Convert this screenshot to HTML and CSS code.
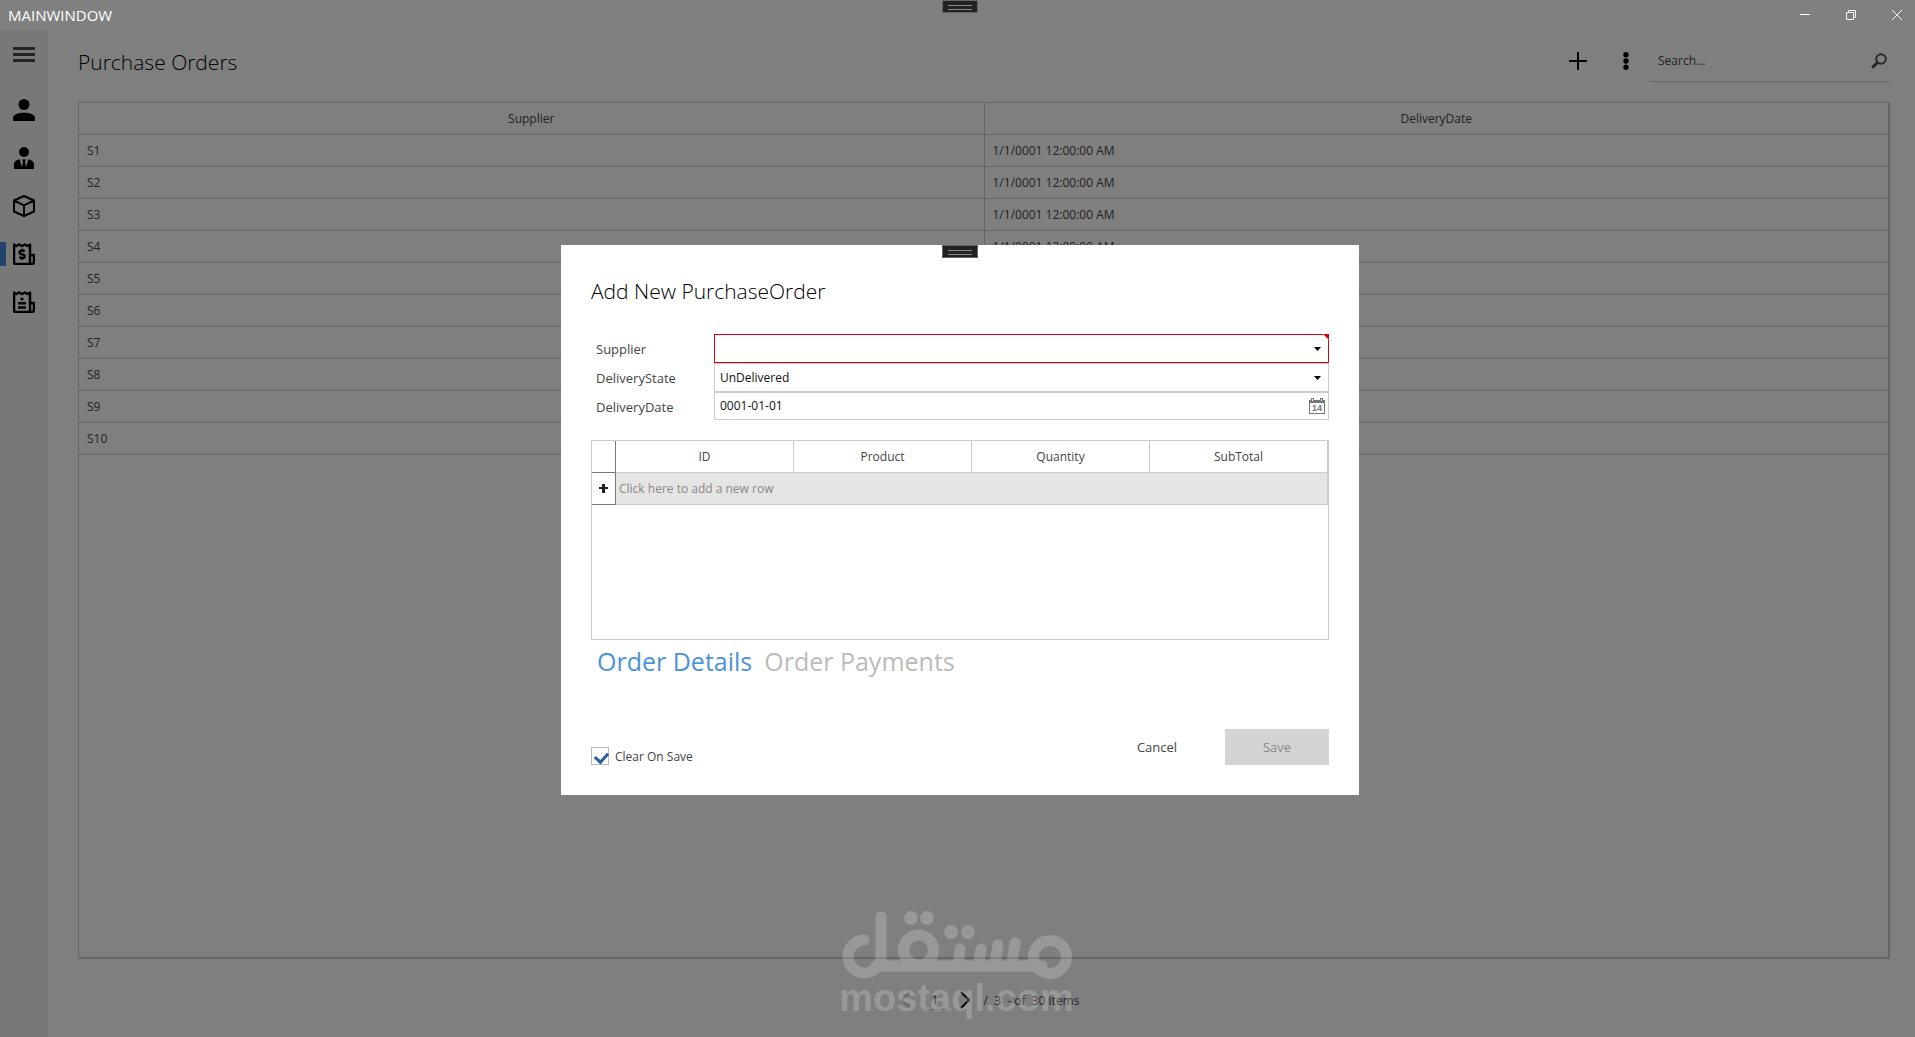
FILE: index.html
```html
<!DOCTYPE html>
<html lang="en">
<head>
  <meta charset="UTF-8" />
  <meta name="viewport" content="width=device-width, initial-scale=1.0" />
  <title>MainWindow</title>
  <link rel="stylesheet" href="styles.css">
</head>
<body>
  <div class="titlebar">
    <span class="window-title">MAINWINDOW</span>
    <span class="handle window-handle"></span>
    <div class="window-buttons">
      <button type="button" aria-label="Minimize">
        <svg width="10" height="10" viewBox="0 0 10 10"><path d="M0 4.500h10" /></svg>
      </button>
      <button type="button" aria-label="Restore">
        <svg width="10" height="10" viewBox="0 0 10 10"><path d="M.5 2.500h7v7h-7zM2.500 2.500v-2h7v7h-2" /></svg>
      </button>
      <button type="button" aria-label="Close">
        <svg width="10" height="10" viewBox="0 0 10 10"><path d="M0 0l10 10M10 0L0 10" /></svg>
      </button>
    </div>
  </div>

  <div class="app">
    <nav class="sidebar">
      <button type="button" class="menu-button" aria-label="Menu">
        <svg width="22" height="22" viewBox="0 0 22 22"><path d="M0 3h22v3H0zM0 9h22v3H0zM0 15h22v3H0z" fill="#4c4554" /></svg>
      </button>
      <button type="button" aria-label="Customers">
        <svg width="22" height="22" viewBox="0 0 22 22"><circle cx="11" cy="5.500" r="5.500" /><path d="M0 22v-3c0-3.500 6-5.300 11-5.300S22 15.500 22 19v3z" /></svg>
      </button>
      <button type="button" aria-label="Employees">
        <svg width="22" height="22" viewBox="0 0 22 22"><circle cx="11" cy="5" r="5" /><path d="M1 22v-4.500c0-3 2.500-4.600 5.500-5.300L9 20l1-5-1-2.500h4L12 15l1 5 2.500-7.800c3 .7 5.500 2.300 5.500 5.300V22z" /></svg>
      </button>
      <button type="button" aria-label="Products">
        <svg width="22" height="22" viewBox="0 0 22 22"><path class="line" d="M11 1l10 4.500v11L11 21 1 16.500v-11zM1 5.500l10 4.800 10-4.800M11 10.300V21" /></svg>
      </button>
      <button type="button" class="active" aria-label="Purchase orders">
        <svg width="22" height="22" viewBox="0 0 22 22"><path class="line bold" d="M17 21H3q-2 0-2-2V1.500L3.500 3 6.300 1.500 9 3l2.700-1.500L14.500 3 17 1.500v17.700q0 1.800 1.900 1.800T21 19v-7h-4" /><path class="line bold" d="M11.700 8.400C9.500 7 6.500 7.600 6.500 9.500c0 2.500 5.200 1.200 5.200 3.700 0 2-3.200 2.300-5.400 1M9 5.700v2M9 14.500v2.300" /></svg>
      </button>
      <button type="button" aria-label="Sale orders">
        <svg width="22" height="22" viewBox="0 0 22 22"><path class="line bold" d="M17 21H3q-2 0-2-2V1.500L3.500 3 6.300 1.500 9 3l2.700-1.500L14.500 3 17 1.500v17.700q0 1.800 1.900 1.800T21 19v-7h-4M7.500 8h3M5 12.300h8M5 16.500h8" /></svg>
      </button>
    </nav>

    <main class="page">
      <header class="page-header">
        <h1>Purchase Orders</h1>
        <button type="button" class="tool" aria-label="Add">
          <svg width="18" height="18" viewBox="0 0 18 18"><path d="M8 0h2v8h8v2h-8v8H8v-8H0V8h8z" /></svg>
        </button>
        <button type="button" class="tool" aria-label="More">
          <svg width="6" height="18" viewBox="0 0 6 18"><circle cx="3" cy="2.700" r="2.700" /><circle cx="3" cy="9" r="2.700" /><circle cx="3" cy="15.300" r="2.700" /></svg>
        </button>
        <div class="search">
          <input type="text" placeholder="Search..." aria-label="Search">
          <svg width="16" height="16" viewBox="0 0 16 16"><circle cx="10" cy="6" r="4.800" fill="none" stroke="#544c5c" stroke-width="2" /><path d="M6.500 9.500L1.200 14.800" stroke="#544c5c" stroke-width="3" /></svg>
        </div>
      </header>

      <div class="grid">
        <table>
          <thead>
            <tr><th>Supplier</th><th>DeliveryDate</th></tr>
          </thead>
          <tbody>
            <tr><td>S1</td><td>1/1/0001 12:00:00 AM</td></tr>
            <tr><td>S2</td><td>1/1/0001 12:00:00 AM</td></tr>
            <tr><td>S3</td><td>1/1/0001 12:00:00 AM</td></tr>
            <tr><td>S4</td><td>1/1/0001 12:00:00 AM</td></tr>
            <tr><td>S5</td><td></td></tr>
            <tr><td>S6</td><td></td></tr>
            <tr><td>S7</td><td></td></tr>
            <tr><td>S8</td><td></td></tr>
            <tr><td>S9</td><td></td></tr>
            <tr><td>S10</td><td></td></tr>
          </tbody>
        </table>
      </div>

      <footer class="pager">
        <button type="button" class="prev" disabled aria-label="Previous page">
          <svg width="10" height="18" viewBox="0 0 10 18"><path d="M9 1L1 9l8 8" /></svg>
        </button>
        <input type="text" value="1" aria-label="Page">
        <button type="button" aria-label="Next page">
          <svg width="10" height="18" viewBox="0 0 10 18"><path d="M1 1l8 8-8 8" /></svg>
        </button>
        <span>/&nbsp; 3 &nbsp;- of &nbsp;30 items</span>
      </footer>
    </main>
  </div>

  <div class="backdrop">
    <form class="dialog" role="dialog" aria-labelledby="dialogTitle">
      <span class="handle"></span>
      <h2 id="dialogTitle">Add New PurchaseOrder</h2>

      <div class="fields">
        <label for="supplier">Supplier</label>
        <div class="field invalid">
          <select id="supplier"><option></option></select>
          <svg class="arrow" width="7" height="4" viewBox="0 0 7 4"><path d="M0 0h7L3.500 4z" /></svg>
        </div>
        <label for="state">DeliveryState</label>
        <div class="field">
          <select id="state"><option>UnDelivered</option></select>
          <svg class="arrow" width="7" height="4" viewBox="0 0 7 4"><path d="M0 0h7L3.500 4z" /></svg>
        </div>
        <label for="date">DeliveryDate</label>
        <div class="field date">
          <input id="date" type="text" value="0001-01-01">
          <svg class="calendar" width="16" height="16" viewBox="0 0 16 16"><path d="M0 2h2V0h3v2h6V0h3v2h2v14H0zM1 5v10h14V5z" fill="#777" fill-rule="evenodd" /><path d="M3 1h1v2H3zM12 1h1v2h-1z" fill="#fff" /><text x="8" y="13" text-anchor="middle">14</text></svg>
        </div>
      </div>

      <div class="details">
        <table>
          <thead>
            <tr><th class="row-header"></th><th>ID</th><th>Product</th><th>Quantity</th><th>SubTotal</th></tr>
          </thead>
          <tbody>
            <tr>
              <td class="row-header"><svg width="9" height="9" viewBox="0 0 9 9"><path d="M3 0h3v3h3v2H6v4H3V5H0V3h3z" fill="#222" /></svg></td>
              <td class="new-row" colspan="4">Click here to add a new row</td>
            </tr>
          </tbody>
        </table>
      </div>

      <div class="tabs">
        <a href="#details" class="selected">Order Details</a>
        <a href="#payments">Order Payments</a>
      </div>

      <div class="actions">
        <label class="check"><input type="checkbox" checked> Clear On Save</label>
        <button type="button">Cancel</button>
        <button type="submit" class="save" disabled>Save</button>
      </div>
    </form>
  </div>

  <div class="watermark">
    <svg width="230" height="68" viewBox="0 0 230 68" role="img" aria-label="mostaql">
      <g fill="none" stroke="#fff" stroke-width="11" stroke-linecap="round">
        <path d="M22 29A16.500 16.500 0 1 0 39 46V6" />
        <path d="M34 55H200" />
        <circle cx="76.500" cy="39" r="15" />
        <path d="M118 38l-2 15M139 38l-2 15M156 34l-3 19M173 32l-3 21" />
        <circle cx="208" cy="46" r="16.500" />
      </g>
      <g fill="#fff">
        <circle cx="69" cy="7" r="7" /><circle cx="85" cy="7" r="7" />
        <circle cx="109" cy="21" r="7" /><circle cx="126" cy="21" r="7" />
      </g>
    </svg>
    <span>mostaql.com</span>
  </div>
</body>
</html>
```
FILE: styles.css
```css
* {
  box-sizing: border-box;
}
body {
  margin: 0;
  min-height: 100vh;
  display: flex;
  flex-direction: column;
  font-family: "Open Sans", "Noto Sans", sans-serif;
  font-size: 12px;
  color: #444;
  background-color: #fff;
}
button, input, select {
  font: inherit;
  color: inherit;
  border: none;
  background: none;
  padding: 0;
  margin: 0;
  outline: none;
}
button {
  display: flex;
  align-items: center;
  justify-content: center;
}
h1, h2 {
  margin: 0;
  font-size: 21px;
  font-weight: 300;
  color: #000;
}
table {
  width: 100%;
  border-collapse: separate;
  border-spacing: 0;
  table-layout: fixed;
}
th {
  padding: 0;
  font-weight: 400;
}

/* window frame */
.titlebar {
  position: relative;
  z-index: 3;
  height: 30px;
  display: flex;
  align-items: center;
  justify-content: space-between;
  padding: 0 5px 0 8px;
  background-color: #808080;
  color: #fff;
}
.window-title {
  font-size: 15px;
}
.window-buttons {
  display: flex;
}
.window-buttons button {
  width: 46px;
  height: 30px;
}
.window-buttons button:last-child {
  width: 26px;
  margin-left: 10px;
}
.window-buttons path {
  fill: none;
  stroke: #fff;
}
.handle {
  position: absolute;
  top: 0;
  left: 50%;
  width: 36px;
  height: 13px;
  margin-left: -18px;
  background-color: #222;
  border: 1px solid #666;
}
.handle::after {
  content: '';
  position: absolute;
  left: 5px;
  right: 5px;
  top: 4px;
  height: 3px;
  border-top: 1px solid #888;
  border-bottom: 1px solid #888;
}
.window-handle {
  margin-left: -16px;
}

/* main window */
.app {
  flex: 1;
  display: flex;
}
.sidebar {
  width: 48px;
  background-color: #f0f0f0;
}
.sidebar button {
  width: 48px;
  height: 48px;
}
.sidebar .menu-button {
  height: 56px;
  padding-bottom: 6px;
}
.sidebar .active {
  position: relative;
}
.sidebar .active::before {
  content: '';
  position: absolute;
  left: 0;
  top: 12px;
  width: 6px;
  height: 24px;
  background-color: #4087d4;
}
.line {
  fill: none;
  stroke: #000;
  stroke-width: 2;
  stroke-linejoin: round;
}
.line.bold {
  stroke-width: 2.5;
}
.page {
  flex: 1;
  display: flex;
  flex-direction: column;
  padding: 0 25px 0 30px;
}
.page-header {
  height: 72px;
  padding-bottom: 10px;
  display: flex;
  align-items: center;
}
.page-header h1 {
  flex: 1;
  padding-top: 2px;
}
.tool {
  width: 48px;
  height: 42px;
}
.search {
  display: flex;
  align-items: center;
  width: 240px;
  height: 42px;
  padding: 0 3px 0 8px;
  border-bottom: 1px solid #ccc;
}
.search input {
  flex: 1;
  min-width: 0;
  font-size: 12px;
}
.search input::placeholder {
  color: #444;
  opacity: 1;
}
.grid {
  flex: 1;
  border: 1px solid #ccc;
  border-right-width: 2px;
  border-bottom-width: 2px;
}
.grid th, .grid td {
  height: 32px;
  padding: 0 8px;
  border-bottom: 1px solid #ccc;
}
.grid th + th, .grid td + td {
  border-left: 1px solid #ccc;
}
.pager {
  height: 78px;
  display: flex;
  align-items: center;
  justify-content: center;
  gap: 10px;
  padding: 4px 0 0 12px;
}
.pager path {
  fill: none;
  stroke: #000;
  stroke-width: 2;
}
.pager .prev path {
  stroke: #ccc;
}
.pager input {
  width: 29px;
  height: 20px;
  text-align: center;
  border-bottom: 1px solid #ccc;
}
.pager span {
  margin-left: 4px;
}

/* dialog */
.backdrop {
  position: fixed;
  inset: 0;
  z-index: 2;
  display: flex;
  align-items: center;
  justify-content: center;
  padding: 3px 0 0 5px;
  background-color: rgba(0, 0, 0, 0.5);
}
.dialog {
  position: relative;
  width: 798px;
  padding: 32px 30px 30px;
  background-color: #fff;
}
.dialog h2 {
  line-height: 28px;
}
.fields {
  display: grid;
  grid-template-columns: 123px 1fr;
  grid-auto-rows: 29px;
  align-items: center;
  margin-top: 29px;
}
.fields label {
  padding-left: 5px;
  font-size: 13px;
}
.field {
  position: relative;
  height: 29px;
  border: 1px solid #ccc;
}
.field.date {
  height: 28px;
  align-self: start;
}
.field select, .field input {
  display: block;
  width: 100%;
  height: 26px;
  padding-left: 5px;
  appearance: none;
  color: #111;
}
.field input {
  height: 24px;
}
.field.invalid {
  border-color: #d9000d;
}
.field.invalid::after {
  content: '';
  position: absolute;
  top: -1px;
  right: -1px;
  border-top: 6px solid #d9000d;
  border-left: 6px solid #fff;
}
.arrow {
  position: absolute;
  right: 7px;
  top: 12px;
  pointer-events: none;
}
.calendar {
  position: absolute;
  right: 3px;
  top: 5px;
}
.calendar text {
  font-family: "Liberation Sans", sans-serif;
  font-size: 9px;
  font-weight: 700;
  fill: #777;
}
.details {
  height: 200px;
  margin-top: 19px;
  border: 1px solid #ccc;
}
.details th {
  height: 32px;
  border-right: 1px solid #ccc;
  border-bottom: 1px solid #ccc;
}
.details td {
  height: 32px;
  padding: 0;
}
.details .row-header {
  width: 24px;
  text-align: center;
  border-right: 1px solid #777;
  border-bottom: 1px solid #777;
}
.details .new-row {
  padding-left: 3px;
  background-color: #e5e5e4;
  border-right: 1px solid #ccc;
  border-bottom: 1px solid #ccc;
  color: #888;
}
.tabs {
  display: flex;
  gap: 12px;
  padding-left: 6px;
  font-size: 25px;
  line-height: 42px;
}
.tabs a {
  color: #bbb;
  text-decoration: none;
}
.tabs .selected {
  color: #4c92da;
}
.actions {
  display: flex;
  align-items: flex-end;
  gap: 16px;
  margin-top: 47px;
}
.actions button {
  width: 104px;
  height: 36px;
  font-size: 13px;
}
.actions .save {
  background-color: #d4d4d4;
  color: #888;
}
.check {
  flex: 1;
  display: flex;
  align-items: center;
  gap: 6px;
}
.check input {
  appearance: none;
  position: relative;
  width: 18px;
  height: 18px;
  border: 1px solid #bbb;
}
.check input:checked::after {
  content: '';
  position: absolute;
  left: 5px;
  top: 2px;
  width: 6px;
  height: 10px;
  border: solid #2b5c9e;
  border-width: 0 3px 3px 0;
  transform: rotate(42deg);
}

/* watermark */
.watermark {
  position: fixed;
  z-index: 4;
  bottom: 20px;
  left: 50%;
  width: 230px;
  margin-left: -116px;
  display: flex;
  flex-direction: column;
  align-items: center;
  opacity: 0.2;
  pointer-events: none;
}
.watermark span {
  font-family: "Liberation Sans", sans-serif;
  font-size: 38px;
  font-weight: 700;
  line-height: 38px;
  color: #fff;
}
```
